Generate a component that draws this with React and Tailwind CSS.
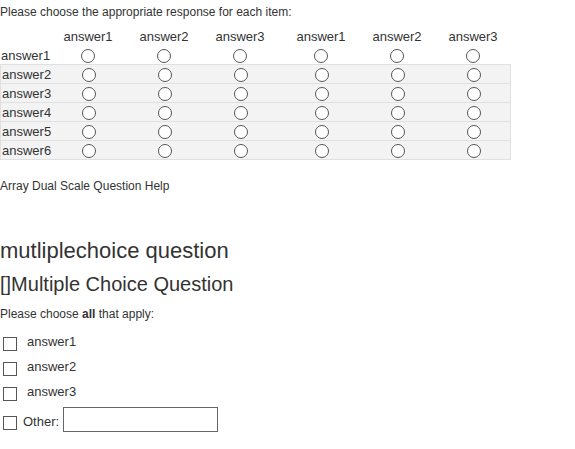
const answers = ["answer1", "answer2", "answer3"];
const rows = ["answer1", "answer2", "answer3", "answer4", "answer5", "answer6"];

const gridCols = "grid grid-cols-[50px_76px_76px_76px_5px_76px_76px_76px] w-[511px]";

const RadioCell = ({ name, value }) => (
    <div className="flex items-center justify-center">
        <input
            type="radio"
            name={name}
            value={value}
            className="appearance-none w-[14px] h-[14px] rounded-full border-[1.5px] border-[#555] bg-white mt-[2px]"
        />
    </div>
);

const ArrayRow = ({ label, index }) => {
    // first row has no background, the rest are striped with borders
    const striped = index > 0;
    const last = index === rows.length - 1;
    return (
        <div
            className={`${gridCols} ${
                striped ? "bg-[#f3f3f3] border-t border-x border-[#e0e0e0] h-[19px]" : "h-[19px]"
            } ${last ? "border-b h-[20px]" : ""}`}
        >
            <div className="flex items-center leading-[17px] pt-[1px] pl-[1px]">{label}</div>
            {answers.map((a) => (
                <RadioCell key={"l" + a} name={"left-" + index} value={a} />
            ))}
            <div />
            {answers.map((a) => (
                <RadioCell key={"r" + a} name={"right-" + index} value={a} />
            ))}
        </div>
    );
};

const checkboxClass = "appearance-none w-[14px] h-[14px] border-[1.5px] border-[#555] bg-white ml-[3px]";

const CheckRow = ({ label, className }) => (
    <label className={`flex items-start ${className}`}>
        <input type="checkbox" className={`${checkboxClass} mt-[2px]`} />
        <span className="ml-[10px] leading-[13px] text-[13px]">{label}</span>
    </label>
);

const App = () => {
    return (
        <div className="w-[575px] h-[449px] bg-white text-[#333] font-['Liberation_Sans',Arial,sans-serif] overflow-hidden">
            {/* Array dual scale question */}
            <div className="pt-[5px] text-[12px] leading-[14px]">
                Please choose the appropriate response for each item:
            </div>

            <div className="mt-[8px] text-[13px]">
                <div className={`${gridCols} h-[18px]`}>
                    <div />
                    {answers.map((a) => (
                        <div key={"h1" + a} className="text-center leading-[17px] pt-[1px]">{a}</div>
                    ))}
                    <div />
                    {answers.map((a) => (
                        <div key={"h2" + a} className="text-center leading-[17px] pt-[1px]">{a}</div>
                    ))}
                </div>
                {rows.map((r, i) => (
                    <ArrayRow key={r} label={r} index={i} />
                ))}
            </div>

            <div className="mt-[19px] text-[12px] leading-[14px]">Array Dual Scale Question Help</div>

            {/* Multiple choice question */}
            <h2 className="mt-[45px] text-[22px] leading-[26px] font-normal">mutliplechoice question</h2>
            <h3 className="mt-[8px] text-[20px] leading-[24px] font-normal">[]Multiple Choice Question</h3>
            <div className="mt-[11px] text-[12px] leading-[14px]">
                Please choose <b>all</b> that apply:
            </div>

            <div className="flex flex-col">
                <CheckRow label="answer1" className="mt-[14px] h-[25px]" />
                <CheckRow label="answer2" className="h-[25px]" />
                <CheckRow label="answer3" className="h-[22px]" />
                <div className="flex items-start">
                    <input type="checkbox" className={`${checkboxClass} mt-[9px]`} />
                    <span className="ml-[6px] mt-[8px] leading-[13px] text-[13px]">Other:</span>
                    <input
                        type="text"
                        className="ml-[4px] w-[155px] h-[25px] border border-[#666] bg-white px-1 text-[13px]"
                    />
                </div>
            </div>
        </div>
    );
};

export default App;
